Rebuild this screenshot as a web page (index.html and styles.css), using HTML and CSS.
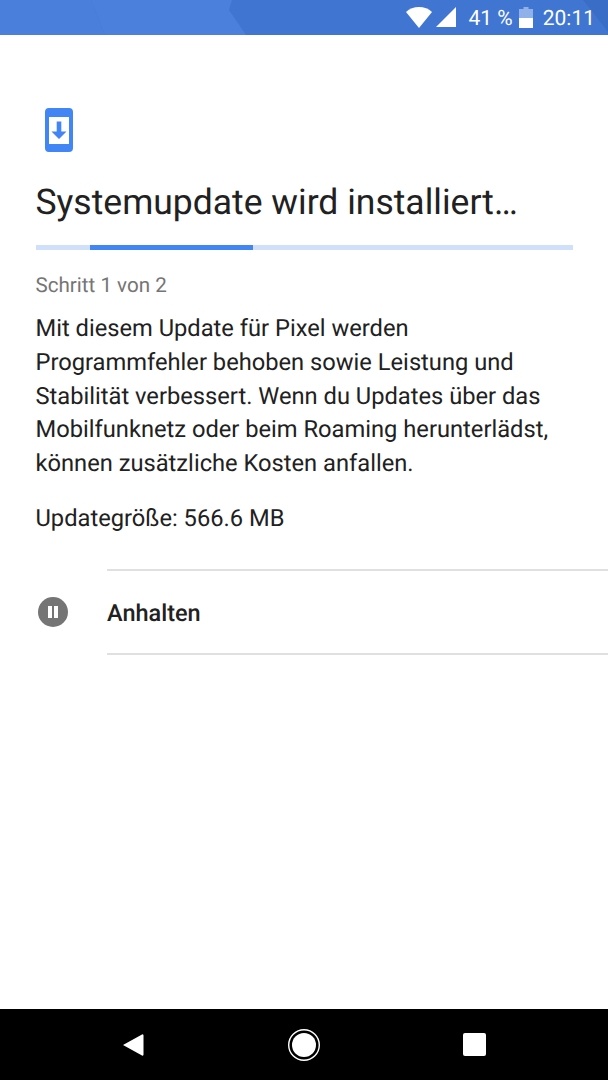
FILE: index.html
```html
<!DOCTYPE html>
<html lang="de">
<head>
<meta charset="utf-8">
<title>Systemupdate</title>
<link rel="stylesheet" href="styles.css">
</head>
<body>
<div class="screen">
  <header class="status">
    <svg class="status-bg" viewBox="0 0 608 35" width="608" height="35" aria-hidden="true">
      <rect width="608" height="35" fill="#4076d2"/>
      <polygon points="0,0 91,0 105,35 0,35" fill="#4a80db"/>
      <polygon points="91,0 232,0 229,10 246,35 105,35" fill="#4b81dc"/>
      <polygon points="583,0 608,0 608,32" fill="#3a6ec6"/>
    </svg>
    <div class="status-items">
      <svg class="wifi" viewBox="0 0 26 21" width="26" height="21" aria-hidden="true"><path d="M0 5C3.500 1.800 8 0 13 0S22.500 1.800 26 5L13 21Z" fill="#fff"/></svg>
      <svg class="signal" viewBox="0 0 20 20" width="20" height="20" aria-hidden="true"><polygon points="0,20 20,0 20,20" fill="#fff"/></svg>
      <span class="pct">41 %</span>
      <svg class="battery" viewBox="0 0 14 21" width="14" height="21" aria-hidden="true"><path d="M4.500 0H9.500V2H14V21H0V2H4.500Z" fill="#8fb0e8"/><rect y="11" width="14" height="10" fill="#fff"/></svg>
      <span class="time">20:11</span>
    </div>
  </header>
  <main class="content">
    <svg class="update-icon" viewBox="0 0 28 44" width="28" height="44" aria-hidden="true">
      <path fill-rule="evenodd" d="M4 0H24A4 4 0 0 1 28 4V40A4 4 0 0 1 24 44H4A4 4 0 0 1 0 40V4A4 4 0 0 1 4 0ZM4 9V36H24V9Z" fill="#4285f4"/>
      <path d="M11.700 13.500H16.300V23.500H21.500L14 31L6.500 23.500H11.700Z" fill="#4285f4"/>
    </svg>
    <h1 class="title">Systemupdate wird installiert…</h1>
    <div class="progress"><div class="progress-bar"></div></div>
    <p class="step">Schritt 1 von 2</p>
    <p class="desc">Mit diesem Update für Pixel werden Programmfehler behoben sowie Leistung und Stabilität verbessert. Wenn du Updates über das Mobilfunknetz oder beim Roaming herunterlädst, können zusätzliche Kosten anfallen.</p>
    <p class="size">Updategröße: 566.6 MB</p>
  </main>
  <section class="action">
    <div class="action-icon">
      <svg viewBox="0 0 30 30" width="30" height="30" aria-hidden="true"><circle cx="15" cy="15" r="15" fill="#757575"/><rect x="10" y="9" width="4" height="12" fill="#fff"/><rect x="16" y="9" width="4" height="12" fill="#fff"/></svg>
    </div>
    <div class="action-label">Anhalten</div>
  </section>
  <div class="spacer"></div>
  <nav class="navbar">
    <svg viewBox="0 0 22 24" width="22" height="24" aria-hidden="true"><path d="M20 1.500A1 1 0 0 1 21.500 2.500V21.500A1 1 0 0 1 20 22.500L1 12Z" fill="#fff"/></svg>
    <svg viewBox="0 0 32 32" width="32" height="32" aria-hidden="true"><circle cx="16" cy="16" r="15.300" fill="none" stroke="#fff" stroke-width="1.400"/><circle cx="16" cy="16" r="12" fill="#fff"/></svg>
    <svg viewBox="0 0 23 23" width="23" height="23" aria-hidden="true"><rect width="23" height="23" rx="2" fill="#fff"/></svg>
  </nav>
</div>
</body>
</html>
```
FILE: styles.css
```css
* { box-sizing: border-box; }
html, body { margin: 0; padding: 0; }
body { background: #fff; font-family: Roboto, "Liberation Sans", sans-serif; text-rendering: geometricPrecision; }
.screen { width: 608px; height: 1080px; display: flex; flex-direction: column; overflow: hidden; }
.status { position: relative; height: 35px; flex: none; border-bottom: 1px solid #4a84e6; }
.status-bg { position: absolute; left: 0; top: 0; }
.status-items { position: relative; height: 34px; display: flex; align-items: center; justify-content: flex-end; padding-right: 13px; color: #fff; font-size: 21px; }
.wifi { margin-right: 4px; }
.signal { margin-right: 13px; }
.pct { margin-right: 6px; padding-top: 3px; }
.time { padding-top: 3px; }
.battery { margin-right: 10px; }
.content { padding: 73px 35px 0 35.5px; flex: none; }
.update-icon { display: block; margin-left: 9.5px; }
.title { margin: 28px 0 0; font-size: 35.5px; line-height: 44px; font-weight: 400; color: #212121; }
.progress { margin-top: 21px; margin-left: 0.5px; height: 5px; background: #d0e0fa; padding-left: 54px; }
.progress-bar { width: 163px; height: 5px; background: #4285f4; }
.step { margin: 22px 0 0; font-size: 20.6px; line-height: 28px; color: #757575; }
.desc { margin: 12px 0 0; font-size: 23.7px; line-height: 33.75px; color: #212121; }
.size { margin: 21px 0 0; font-size: 23.7px; line-height: 33.75px; color: #212121; }
.action { display: flex; margin-top: 33px; flex: none; }
.action-icon { width: 107px; padding-left: 38px; display: flex; align-items: center; }
.action-label { flex: 1; height: 86px; border-top: 2px solid #e0e0e0; border-bottom: 2px solid #e0e0e0; display: flex; align-items: center; padding-top: 3px; font-size: 23.5px; font-weight: 500; color: #212121; }
.spacer { flex: 1; }
.navbar { height: 71px; flex: none; background: #000; display: flex; align-items: center; justify-content: space-between; padding: 0 122px; }
```
